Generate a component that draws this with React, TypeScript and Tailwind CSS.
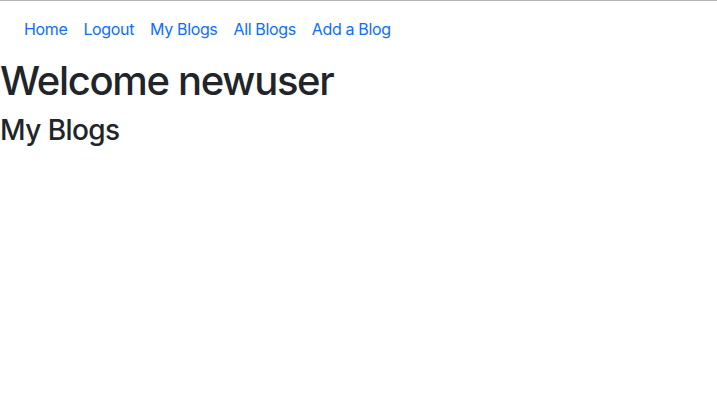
import React from 'react';

const links = ['Home', 'Logout', 'My Blogs', 'All Blogs', 'Add a Blog'];

export default function App() {
  return (
    <div className="min-h-[400px] bg-white border-t border-[#b4b4b4] text-[#212529] font-['Inter',sans-serif]">
      <nav className="py-2 px-4">
        <ul className="flex items-center">
          {links.map((name) => (
            <li key={name}>
              <a href="#" className="block px-2 py-2 text-base leading-6 tracking-[-0.022em] text-[#0d6efd]">
                {name}
              </a>
            </li>
          ))}
        </ul>
      </nav>
      <h1 className="text-[40px] leading-[48px] font-medium tracking-[-0.033em] mb-2">Welcome newuser</h1>
      <h2 className="text-[28px] leading-[34px] font-medium tracking-[-0.02em]">My Blogs</h2>
    </div>
  );
}
